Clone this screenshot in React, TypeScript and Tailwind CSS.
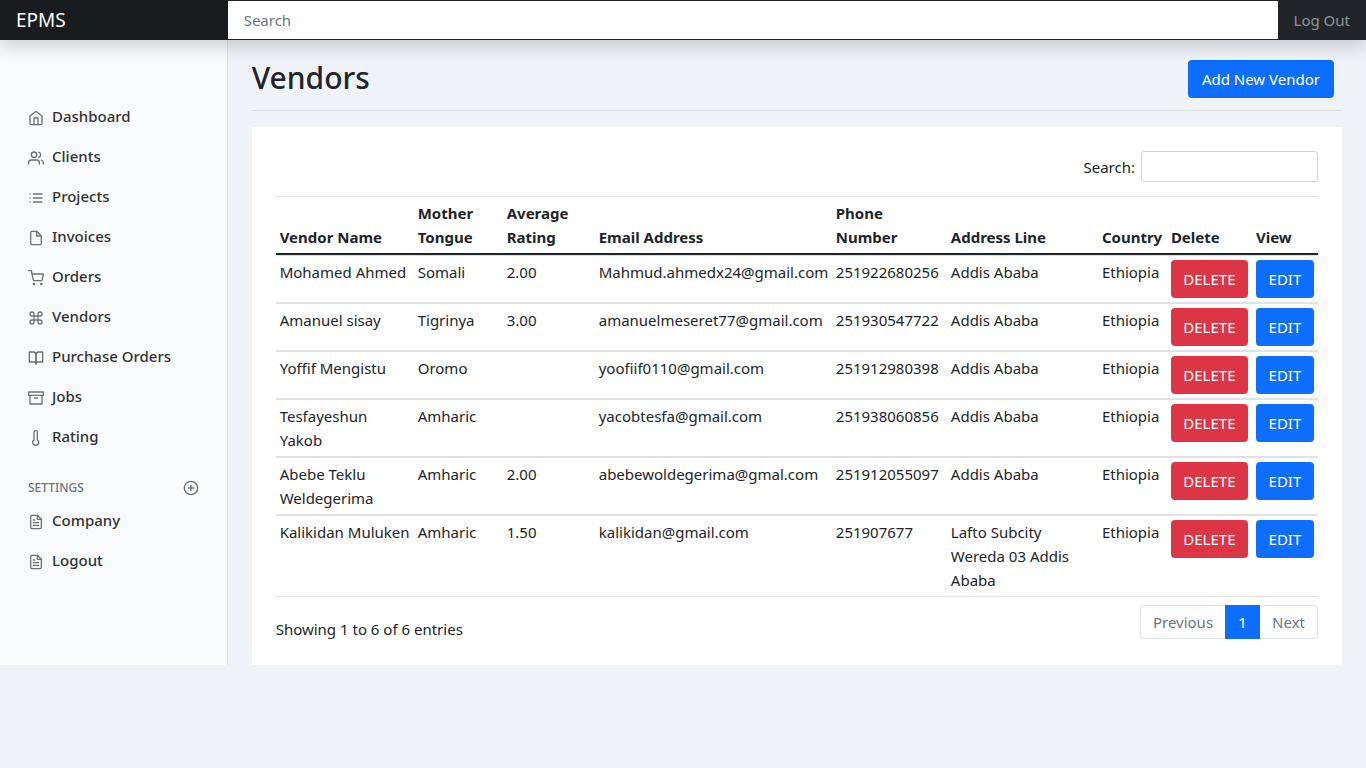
import { useState } from "react";
import type { IconType } from "react-icons";
import {
  FiArchive,
  FiBookOpen,
  FiCommand,
  FiFile,
  FiFileText,
  FiHome,
  FiList,
  FiPlusCircle,
  FiShoppingCart,
  FiThermometer,
  FiUsers,
} from "react-icons/fi";

type NavItem = { label: string; icon: IconType };

const mainNav: NavItem[] = [
  { label: "Dashboard", icon: FiHome },
  { label: "Clients", icon: FiUsers },
  { label: "Projects", icon: FiList },
  { label: "Invoices", icon: FiFile },
  { label: "Orders", icon: FiShoppingCart },
  { label: "Vendors", icon: FiCommand },
  { label: "Purchase Orders", icon: FiBookOpen },
  { label: "Jobs", icon: FiArchive },
  { label: "Rating", icon: FiThermometer },
];

const settingsNav: NavItem[] = [
  { label: "Company", icon: FiFileText },
  { label: "Logout", icon: FiFileText },
];

const columns = [
  { label: "Vendor Name", width: "w-[138px]" },
  { label: "Mother Tongue", width: "w-[89px]" },
  { label: "Average Rating", width: "w-[92px]" },
  { label: "Email Address", width: "w-[237px]" },
  { label: "Phone Number", width: "w-[115px]" },
  { label: "Address Line", width: "w-[151px]" },
  { label: "Country", width: "w-[69px]" },
  { label: "Delete", width: "w-[85px]" },
  { label: "View", width: "w-[66px]" },
];

const vendors = [
  ["Mohamed Ahmed", "Somali", "2.00", "Mahmud.ahmedx24@gmail.com", "251922680256", "Addis Ababa", "Ethiopia"],
  ["Amanuel sisay", "Tigrinya", "3.00", "amanuelmeseret77@gmail.com", "251930547722", "Addis Ababa", "Ethiopia"],
  ["Yoffif Mengistu", "Oromo", "", "yoofiif0110@gmail.com", "251912980398", "Addis Ababa", "Ethiopia"],
  ["Tesfayeshun Yakob", "Amharic", "", "yacobtesfa@gmail.com", "251938060856", "Addis Ababa", "Ethiopia"],
  ["Abebe Teklu Weldegerima", "Amharic", "2.00", "abebewoldegerima@gmal.com", "251912055097", "Addis Ababa", "Ethiopia"],
  ["Kalikidan Muluken", "Amharic", "1.50", "kalikidan@gmail.com", "251907677", "Lafto Subcity Wereda 03 Addis Ababa", "Ethiopia"],
];

function NavList({ items }: { items: NavItem[] }) {
  return (
    <ul>
      {items.map(({ label, icon: Icon }) => (
        <li key={label}>
          <a href="#" className="flex h-10 items-center gap-2 pr-4 pl-7 font-medium text-[#333]">
            <Icon className="mt-1 size-4 shrink-0 text-[#727272]" />
            {label}
          </a>
        </li>
      ))}
    </ul>
  );
}

function Header() {
  return (
    <header className="relative z-10 flex h-10 bg-[#212529] shadow-[0_8px_16px_rgba(0,0,0,0.15)]">
      <a href="#" className="flex w-1/6 shrink-0 items-center bg-[#191c1f] px-4 text-[19px] text-white">
        EPMS
      </a>
      <input
        type="text"
        aria-label="Search"
        placeholder="Search"
        className="my-px min-w-0 flex-1 bg-white px-4 text-[#212529] outline-none placeholder:text-[#6c757d]"
      />
      <a href="#" className="flex items-center px-4 text-white/50">
        Log Out
      </a>
    </header>
  );
}

function VendorTable({ query }: { query: string }) {
  const rows = vendors.filter((row) => row.join(" ").toLowerCase().includes(query.toLowerCase()));
  return (
    <table className="mt-3.5 w-full table-fixed border-separate border-spacing-0 text-left">
      <thead>
        <tr className="align-bottom">
          {columns.map((column) => (
            <th
              key={column.label}
              className={`${column.width} border-t border-b-2 border-t-[#dee2e6] border-b-[#212529] p-1 font-bold`}
            >
              {column.label}
            </th>
          ))}
        </tr>
      </thead>
      <tbody>
        {rows.map((row) => (
          <tr key={row[0]} className="align-top">
            {row.map((cell, i) => (
              <td key={columns[i].label} className="border-y border-[#dee2e6] p-1">
                {cell}
              </td>
            ))}
            <td className="border-y border-[#dee2e6] p-1">
              <button type="button" className="block h-[38px] w-[77px] rounded bg-[#dc3545] text-white">
                DELETE
              </button>
            </td>
            <td className="border-y border-[#dee2e6] p-1">
              <button type="button" className="block h-[38px] w-[58px] rounded bg-[#0d6efd] text-white">
                EDIT
              </button>
            </td>
          </tr>
        ))}
      </tbody>
    </table>
  );
}

export default function App() {
  const [query, setQuery] = useState("");
  return (
    <div className="min-h-screen bg-[#eff3f8] font-['Segoe_UI','Noto_Sans',sans-serif] text-[15px] leading-6 text-[#212529]">
      <Header />
      <div className="flex">
        <nav aria-label="Main" className="w-1/6 shrink-0 border-r border-[#dcdfe3] bg-[#f8fafc] pt-14">
          <NavList items={mainNav} />
          <div className="mt-6 mb-1 flex h-4 items-center justify-between px-7 text-[#6c757d]">
            <h2 className="text-xs font-medium">SETTINGS</h2>
            <button type="button" aria-label="Add a setting">
              <FiPlusCircle className="size-4" />
            </button>
          </div>
          <NavList items={settingsNav} />
        </nav>

        <main className="min-w-0 flex-1 px-6 pt-4">
          <div className="mb-4 flex items-start justify-between border-b border-[#dcdfe4] pt-1 pr-2 pb-3">
            <h1 className="text-3xl leading-9 font-medium">Vendors</h1>
            <button type="button" className="h-[38px] rounded bg-[#0d6efd] px-3.5 text-white">
              Add New Vendor
            </button>
          </div>

          <section className="bg-white p-6">
            <div className="flex justify-end">
              <label className="flex items-center gap-1.5">
                Search:
                <input
                  type="search"
                  value={query}
                  onChange={(event) => setQuery(event.target.value)}
                  className="h-[31px] w-[177px] rounded-[3px] border border-[#ced4da] bg-white px-2 outline-none"
                />
              </label>
            </div>
            <VendorTable query={query} />
            <div className="flex items-start justify-between pt-2">
              <p className="pt-3">Showing 1 to 6 of 6 entries</p>
              <div className="flex h-[34px] text-[#6c757d]">
                <button type="button" className="rounded-l border border-r-0 border-[#dee2e6] px-3">
                  Previous
                </button>
                <button type="button" className="w-[35px] bg-[#0d6efd] text-white">
                  1
                </button>
                <button type="button" className="rounded-r border border-l-0 border-[#dee2e6] px-3">
                  Next
                </button>
              </div>
            </div>
          </section>
        </main>
      </div>
    </div>
  );
}
